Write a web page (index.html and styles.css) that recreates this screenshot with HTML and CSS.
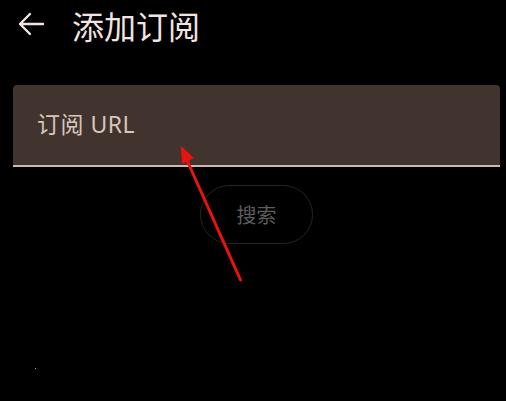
FILE: index.html
```html
<!DOCTYPE html>
<html lang="zh">
<head>
<meta charset="utf-8">
<link rel="stylesheet" href="styles.css">
</head>
<body>
<div class="page">
  <header class="topbar">
    <svg class="back" viewBox="0 0 28 26" width="28" height="26"><path d="M26 13H3M13 3L3 13L13 23" fill="none" stroke="#f2e4e0" stroke-width="2.4" stroke-linecap="round" stroke-linejoin="round"/></svg>
    <h1 class="title">添加订阅</h1>
  </header>
  <div class="content">
    <div class="field">
      <span class="label">订阅 URL</span>
    </div>
    <div class="actions">
      <button class="search">搜索</button>
    </div>
  </div>
  <svg class="annot" width="506" height="401" viewBox="0 0 506 401">
    <line x1="240.5" y1="280" x2="186" y2="158" stroke="#ee1111" stroke-width="3" stroke-linecap="round"/>
    <polygon points="181,146 194,158 182,164" fill="#ee1111"/>
  </svg>
  <span class="dot"></span>
</div>
</body>
</html>
```
FILE: styles.css
```css
html, body {
  margin: 0;
  padding: 0;
  background: #000;
}
.page {
  position: relative;
  width: 506px;
  height: 401px;
  overflow: hidden;
  font-family: "Noto Sans", "Noto Sans CJK SC", sans-serif;
}
.topbar {
  display: flex;
  align-items: center;
  height: 50px;
  padding-left: 17px;
}
.back {
  display: block;
  margin-top: -2px;
}
.title {
  margin: 0 0 0 27px;
  font-family: "Noto Sans CJK SC", sans-serif;
  font-weight: 400;
  font-size: 32px;
  line-height: 40px;
  color: #f2e4e0;
}
.content {
  padding: 35px 6px 0 13px;
}
.field {
  display: flex;
  align-items: center;
  background: #41332e;
  border-radius: 4px 4px 0 0;
  border-bottom: 2px solid #cdb9b1;
  padding-left: 24px;
  padding-bottom: 4px;
  box-sizing: border-box;
  height: 82px;
}
.label {
  font-size: 23px;
  letter-spacing: 0.5px;
  color: #d6c6be;
}
.actions {
  display: flex;
  justify-content: center;
  padding-top: 18px;
}
.search {
  width: 113px;
  height: 59px;
  border-radius: 30px;
  border: 1px solid #262626;
  background: transparent;
  color: #5c5c5c;
  font-family: "Noto Sans CJK SC", sans-serif;
  font-size: 20px;
  padding: 0;
}
.annot {
  position: absolute;
  left: 0;
  top: 0;
  pointer-events: none;
}
.dot {
  position: absolute;
  left: 35px;
  top: 368px;
  width: 1px;
  height: 1px;
  background: #aaa;
}
```
